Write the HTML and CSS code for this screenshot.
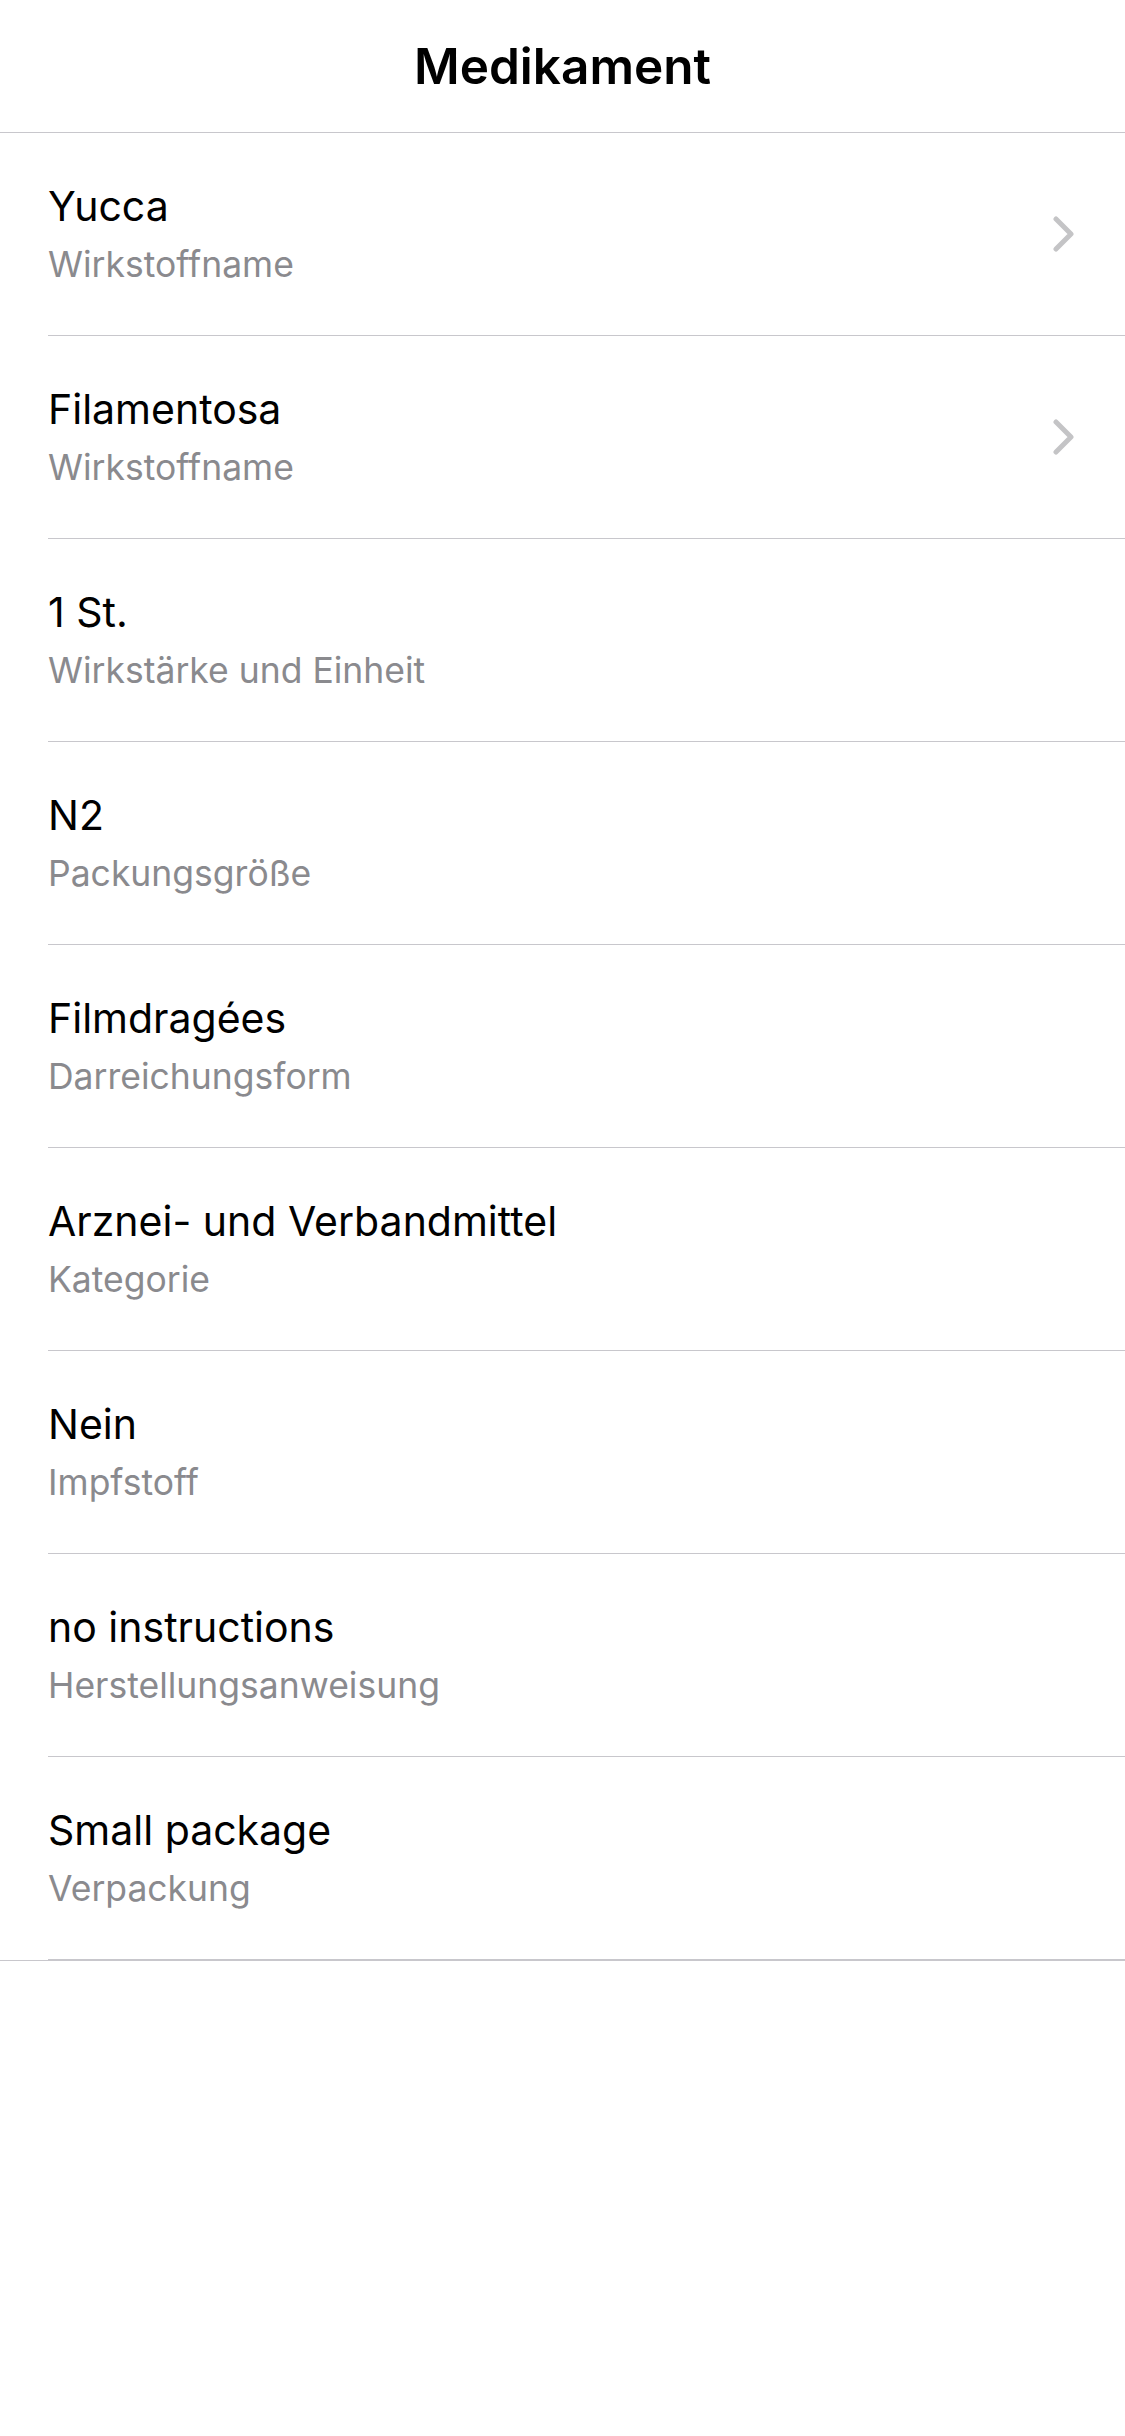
FILE: index.html
```html
<!DOCTYPE html>
<html lang="de">
<head>
<meta charset="utf-8">
<title>Medikament</title>
<link rel="stylesheet" href="styles.css">
</head>
<body>
<header class="nav">
  <h1 class="nav-title">Medikament</h1>
</header>
<main class="list">
  <div class="row">
    <div class="row-inner">
      <div class="texts"><div class="value">Yucca</div><div class="label">Wirkstoffname</div></div>
      <svg class="chevron" width="21" height="36" viewBox="0 0 21 36"><path d="M3 3 L18 18 L3 33" fill="none" stroke="#c4c4c6" stroke-width="5" stroke-linecap="round" stroke-linejoin="round"/></svg>
    </div>
  </div>
  <div class="row">
    <div class="row-inner">
      <div class="texts"><div class="value">Filamentosa</div><div class="label">Wirkstoffname</div></div>
      <svg class="chevron" width="21" height="36" viewBox="0 0 21 36"><path d="M3 3 L18 18 L3 33" fill="none" stroke="#c4c4c6" stroke-width="5" stroke-linecap="round" stroke-linejoin="round"/></svg>
    </div>
  </div>
  <div class="row">
    <div class="row-inner">
      <div class="texts"><div class="value">1 St.</div><div class="label">Wirkstärke und Einheit</div></div>
    </div>
  </div>
  <div class="row">
    <div class="row-inner">
      <div class="texts"><div class="value">N2</div><div class="label">Packungsgröße</div></div>
    </div>
  </div>
  <div class="row">
    <div class="row-inner">
      <div class="texts"><div class="value">Filmdragées</div><div class="label">Darreichungsform</div></div>
    </div>
  </div>
  <div class="row">
    <div class="row-inner">
      <div class="texts"><div class="value">Arznei- und Verbandmittel</div><div class="label">Kategorie</div></div>
    </div>
  </div>
  <div class="row">
    <div class="row-inner">
      <div class="texts"><div class="value">Nein</div><div class="label">Impfstoff</div></div>
    </div>
  </div>
  <div class="row">
    <div class="row-inner">
      <div class="texts"><div class="value">no instructions</div><div class="label">Herstellungsanweisung</div></div>
    </div>
  </div>
  <div class="row">
    <div class="row-inner">
      <div class="texts"><div class="value">Small package</div><div class="label">Verpackung</div></div>
    </div>
  </div>
</main>
</body>
</html>
```
FILE: styles.css
```css
html, body {
  margin: 0;
  padding: 0;
  background: #ffffff;
}
body {
  font-family: Inter, "Noto Sans", "Liberation Sans", sans-serif;
  color: #000000;
  width: 1125px;
}
.nav {
  height: 132px;
  border-bottom: 1px solid #c8c7cc;
  display: flex;
  align-items: center;
  justify-content: center;
}
.nav-title {
  margin: 0;
  font-size: 49.5px;
  line-height: 132px;
  font-weight: 600;
}
.list {
  border-bottom: 1px solid #c8c7cc;
}
.row {
  padding-left: 48px;
}
.row-inner {
  height: 202px;
  border-bottom: 1px solid #c8c7cc;
  display: flex;
  align-items: center;
  justify-content: space-between;
  padding-right: 51px;
}
.texts {
  display: flex;
  flex-direction: column;
}
.value {
  font-size: 41px;
  line-height: 50px;
  color: #000000;
}
.label {
  margin-top: 12px;
  font-size: 35.5px;
  line-height: 44px;
  color: #8a8a8e;
}
.chevron {
  display: block;
  flex: none;
}
```
